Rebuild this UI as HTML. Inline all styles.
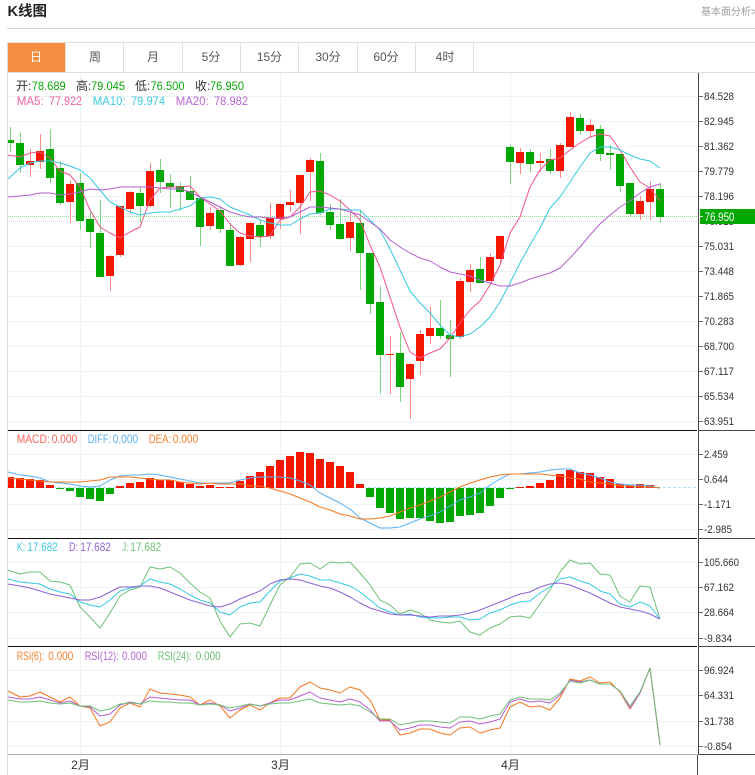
<!DOCTYPE html>
<html><head><meta charset="utf-8"><title>K线图</title>
<style>
html,body{margin:0;padding:0;background:#fff;width:755px;height:775px;overflow:hidden}
svg{display:block;position:absolute;left:0;top:0}
text{font-family:"Liberation Sans","Noto Sans CJK SC",sans-serif;font-size:11px}
.l text{font-size:12px}
polyline{fill:none;stroke-width:1;stroke-linejoin:round}
</style></head><body>
<svg width="755" height="775" viewBox="0 0 755 775" xmlns="http://www.w3.org/2000/svg">
<text x="7.5" y="16" style="font-size:14.5px;font-weight:bold" fill="#222">K线图</text>
<text x="701" y="15" style="font-size:10px" fill="#a0a0a0">基本面分析&gt;</text>
<path d="M7 28.5H755" stroke="#d4d4d4"/>
<path d="M7 42.5H755M7 72.5H755" stroke="#dedede"/>
<path d="M7.5 42V775" stroke="#dcdcdc"/>
<rect x="8" y="43" width="57" height="29" fill="#f38d40"/>
<path d="M65.5 43V72M123.5 43V72M182.5 43V72M240.5 43V72M298.5 43V72M357.5 43V72M415.5 43V72M473.5 43V72" stroke="#dedede"/>
<g style="font-size:12px" text-anchor="middle" fill="#555">
<text x="36" y="61" style="font-size:12px" fill="#fff">日</text>
<text x="95" y="61" style="font-size:12px">周</text>
<text x="153" y="61" style="font-size:12px">月</text>
<text x="211" y="61" style="font-size:12px">5分</text>
<text x="269.5" y="61" style="font-size:12px">15分</text>
<text x="328" y="61" style="font-size:12px">30分</text>
<text x="386" y="61" style="font-size:12px">60分</text>
<text x="445" y="61" style="font-size:12px">4时</text>
</g>
<!-- grid -->
<path d="M8 96.5H697M8 121.5H697M8 146.5H697M8 171.5H697M8 196.5H697M8 221.5H697M8 246.5H697M8 271.5H697M8 296.5H697M8 321.5H697M8 346.5H697M8 371.5H697M8 396.5H697M8 421.5H697M8 454.5H697M8 479.5H697M8 504.5H697M8 529.5H697M8 562.5H697M8 587.5H697M8 612.5H697M8 638.5H697M8 670.5H697M8 695.5H697M8 721.5H697M8 746.5H697" stroke="#edf2f6"/>
<path d="M80.5 73V757M280.5 73V757M510.5 73V757" stroke="#ecf2f6"/>
<path d="M8 216.5H697" stroke="#8fdc8f" stroke-dasharray="1 1"/>
<!-- candles -->
<path d="M10.5 127V152M20.5 133V173M50.5 129V183M60.5 161V205M80.5 173V230M90.5 212V248M100.5 200V277M140.5 187V223M160.5 159V193M170.5 174V208M180.5 182V211M190.5 176V200M200.5 198V246M220.5 206V233M230.5 223V266M260.5 220V247M320.5 153V215M330.5 204V230M340.5 199V240M360.5 210V290M370.5 253V314M380.5 286V394M400.5 332V402M440.5 300V339M450.5 320V377M480.5 257V283M510.5 144V184M530.5 149V172M550.5 149V174M580.5 114V135M600.5 125V161M610.5 145V170M620.5 154V192M630.5 183V217M660.5 183V223" stroke="#7ad77a"/>
<path d="M30.5 149V177M40.5 134V169M70.5 180V223M110.5 255V291M120.5 206V257M130.5 191V214M150.5 163V207M210.5 207V230M240.5 236V266M250.5 222V262M270.5 203V239M280.5 203V229M290.5 190V212M300.5 175V234M310.5 158V201M350.5 213V251M390.5 336V394M410.5 363V419M420.5 330V375M430.5 306V344M460.5 278V339M470.5 264V292M490.5 253V281M500.5 236V263M520.5 148V174M540.5 153V172M560.5 143V178M570.5 112V147M590.5 119V138M640.5 196V220M650.5 181V220" stroke="#fb8a80"/>
<path fill="#02a802" d="M8 140h6V143h-6zM16 143h8V165h-8zM46 149h8V178h-8zM56 168h8V203h-8zM76 183h8V221h-8zM86 219h8V232h-8zM96 233h8V277h-8zM136 193h8V206h-8zM156 170h8V182h-8zM166 183h8V187h-8zM176 186h8V192h-8zM186 191h8V200h-8zM196 198h8V227h-8zM216 210h8V229h-8zM226 230h8V266h-8zM256 225h8V237h-8zM316 161h8V213h-8zM326 212h8V225h-8zM336 224h8V239h-8zM356 223h8V253h-8zM366 253h8V304h-8zM376 302h8V355h-8zM396 353h8V387h-8zM436 328h8V336h-8zM446 335h8V339h-8zM476 269h8V283h-8zM506 147h8V162h-8zM526 152h8V164h-8zM546 159h8V171h-8zM576 118h8V131h-8zM596 129h8V154h-8zM606 153h8V155h-8zM616 154h8V186h-8zM626 183h8V214h-8zM656 189h8V217h-8z"/>
<path fill="#f51600" d="M26 161h8V165h-8zM36 151h8V162h-8zM66 184h8V202h-8zM106 256h8V276h-8zM116 206h8V255h-8zM126 192h8V209h-8zM146 171h8V206h-8zM206 213h8V226h-8zM236 237h8V265h-8zM246 223h8V239h-8zM266 218h8V236h-8zM276 204h8V219h-8zM286 202h8V205h-8zM296 175h8V203h-8zM306 160h8V172h-8zM346 222h8V238h-8zM386 354h8V355h-8zM406 364h8V379h-8zM416 334h8V361h-8zM426 328h8V336h-8zM456 281h8V337h-8zM466 270h8V282h-8zM486 257h8V281h-8zM496 236h8V259h-8zM516 152h8V163h-8zM536 161h8V163h-8zM556 145h8V171h-8zM566 117h8V147h-8zM586 125h8V131h-8zM636 201h8V214h-8zM646 189h8V202h-8z"/>
<!-- MA -->
<polyline stroke="#f0528c" points="8,155 20,157 30,153 40,152 50,158 60,171 70,175 80,187 90,210 100,227 110,233 120,238 130,232 140,227 150,200 160,188 170,187 180,187 190,186 200,197 210,204 220,211 230,224 240,233 250,236 260,237 270,236 280,220 290,217 300,207 310,192 320,191 330,195 340,201 350,210 360,220 370,245 380,267 390,297 400,327 410,352 420,358 430,353 440,349 450,338 460,323 470,310 480,301 490,285 500,265 510,233 520,217 530,187 540,170 550,160 560,158 570,150 580,143 590,137 600,134 610,136 620,150 630,167 640,182 650,188 660,201"/>
<polyline stroke="#35c9e2" points="8,179 20,168 30,163 40,161 50,161 60,163 70,166 80,170 90,178 100,190 110,202 120,207 130,212 140,215 150,213 160,212 170,212 180,209 190,206 200,198 210,197 220,199 230,207 240,211 250,215 260,220 270,223 280,225 290,225 300,219 310,214 320,213 330,209 340,209 350,210 360,210 370,220 380,230 390,249 400,270 410,291 420,303 430,313 440,325 450,335 460,337 470,334 480,327 490,317 500,302 510,283 520,263 530,245 540,228 550,208 560,197 570,182 580,167 590,153 600,147 610,147 620,150 630,155 640,159 650,161 660,168"/>
<polyline stroke="#b55fd2" points="8,197 20,196 30,195 40,193 50,193 60,195 70,194 80,192 90,189 100,190 110,189 120,187 130,187 140,187 150,187 160,188 170,189 180,189 190,192 200,197 210,202 220,207 230,212 240,215 250,217 260,217 270,218 280,218 290,217 300,212 310,207 320,207 330,208 340,209 350,212 360,215 370,222 380,229 390,240 400,247 410,253 420,258 430,261 440,267 450,272 460,274 470,276 480,280 490,283 500,286 510,286 520,283 530,279 540,276 550,273 560,268 570,258 580,247 590,235 600,224 610,215 620,207 630,201 640,193 650,187 660,184"/>
<!-- MACD -->
<path d="M8 487.5H697" stroke="#a9e5f5" stroke-dasharray="3 2"/>
<path fill="#02a802" d="M56 488h8V489h-8zM66 488h8V491h-8zM76 488h8V497h-8zM86 488h8V499h-8zM96 488h8V501h-8zM106 488h8V494h-8zM366 488h8V497h-8zM376 488h8V508h-8zM386 488h8V513h-8zM396 488h8V519h-8zM406 488h8V518h-8zM416 488h8V518h-8zM426 488h8V521h-8zM436 488h8V523h-8zM446 488h8V522h-8zM456 488h8V516h-8zM466 488h8V515h-8zM476 488h8V513h-8zM486 488h8V506h-8zM496 488h8V498h-8zM506 488h8V489h-8z"/>
<path fill="#f51600" d="M8 477h6V488h-6zM16 478h8V488h-8zM26 479h8V488h-8zM36 480h8V488h-8zM46 485h8V488h-8zM116 486h8V488h-8zM126 483h8V488h-8zM136 482h8V488h-8zM146 478h8V488h-8zM156 480h8V488h-8zM166 480h8V488h-8zM176 482h8V488h-8zM186 484h8V488h-8zM196 486h8V488h-8zM206 485h8V488h-8zM216 487h8V488h-8zM226 487h8V488h-8zM236 481h8V488h-8zM246 476h8V488h-8zM256 472h8V488h-8zM266 466h8V488h-8zM276 460h8V488h-8zM286 456h8V488h-8zM296 452h8V488h-8zM306 453h8V488h-8zM316 459h8V488h-8zM326 462h8V488h-8zM336 466h8V488h-8zM346 472h8V488h-8zM356 484h8V488h-8zM516 487h8V488h-8zM526 486h8V488h-8zM536 483h8V488h-8zM546 480h8V488h-8zM556 474h8V488h-8zM566 470h8V488h-8zM576 472h8V488h-8zM586 473h8V488h-8zM596 477h8V488h-8zM606 479h8V488h-8zM616 484h8V488h-8zM626 485h8V488h-8zM636 484h8V488h-8zM646 485h8V488h-8z"/>
<polyline stroke="#5bb0f5" points="8,472 20,475 30,476 40,478 50,482 60,483 70,484 80,486 90,487 100,486 110,480 120,476 130,475 140,475 150,474 160,475 170,477 180,479 190,481 200,483 210,483 220,483 230,483 240,480 250,478 260,477 270,477 280,477 290,478 300,481 310,485 320,493 330,498 340,503 350,509 360,518 370,523 380,528 390,528 400,527 410,523 420,519 430,516 440,512 450,506 460,500 470,497 480,493 490,485 500,479 510,474 520,474 530,473 540,472 550,470 560,469 570,469 580,473 590,475 600,478 610,482 620,484 630,485 640,485 650,486 660,488"/>
<polyline stroke="#f6781f" points="8,478 20,479 30,480 40,481 50,482 60,482 70,482 80,482 90,481 100,480 110,477 120,477 130,477 140,478 150,479 160,480 170,480 180,482 190,483 200,484 210,483 220,484 230,484 240,484 250,486 260,486 270,488 280,491 290,494 300,498 310,502 320,507 330,510 340,514 350,516 360,519 370,519 380,518 390,516 400,512 410,508 420,505 430,501 440,497 450,492 460,487 470,483 480,480 490,477 500,475 510,474 520,474 530,474 540,474 550,475 560,476 570,478 580,479 590,482 600,483 610,484 620,486 630,486 640,487 650,487 660,488"/>
<!-- KDJ -->
<polyline stroke="#6fc076" points="8,570 20,574 30,572 40,572 50,581 60,582 70,585 80,607 90,617 100,628 110,613 120,596 130,590 140,587 150,567 160,569 170,567 180,573 190,583 200,592 210,598 220,621 230,637 240,624 250,623 260,626 270,605 280,585 290,577 300,564 310,563 320,569 330,562 340,563 350,562 360,573 370,585 380,600 390,605 400,614 410,610 420,613 430,620 440,622 450,623 460,621 470,632 480,635 490,628 500,624 510,617 520,616 530,618 540,604 550,590 560,572 570,560 580,564 590,563 600,574 610,575 620,596 630,602 640,586 650,587 660,619"/>
<polyline stroke="#35c9e2" points="8,579 20,582 30,583 40,584 50,589 60,592 70,594 80,602 90,605 100,607 110,600 120,591 130,588 140,586 150,579 160,582 170,584 180,589 190,595 200,600 210,603 220,612 230,615 240,607 250,603 260,602 270,591 280,581 290,578 300,574 310,576 320,580 330,580 340,583 350,586 360,592 370,600 380,608 390,612 400,615 410,614 420,617 430,618 440,618 450,617 460,617 470,620 480,619 490,613 500,610 510,605 520,602 530,601 540,593 550,587 560,579 570,577 580,581 590,584 600,591 610,594 620,604 630,607 640,602 650,606 660,619"/>
<polyline stroke="#8d62d4" points="8,584 20,586 30,588 40,591 50,594 60,596 70,598 80,600 90,600 100,597 110,592 120,587 130,587 140,586 150,586 160,588 170,592 180,596 190,600 200,603 210,606 220,607 230,604 240,599 250,595 260,591 270,584 280,580 290,579 300,580 310,583 320,586 330,588 340,592 350,597 360,603 370,608 380,611 390,614 400,615 410,615 420,616 430,617 440,616 450,616 460,615 470,613 480,610 490,606 500,602 510,598 520,594 530,592 540,587 550,584 560,583 570,585 580,589 590,593 600,598 610,603 620,607 630,609 640,611 650,614 660,619"/>
<!-- RSI -->
<polyline stroke="#f6781f" points="8,691 20,697 30,696 40,692 50,697 60,702 70,697 80,706 90,708 100,726 110,722 120,708 130,703 140,707 150,689 160,693 170,694 180,695 190,697 200,705 210,700 220,706 230,718 240,710 250,705 260,710 270,703 280,698 290,698 300,687 310,682 320,688 330,690 340,693 350,687 360,690 370,700 380,720 390,720 400,735 410,733 420,729 430,729 440,733 450,735 460,728 470,727 480,733 490,730 500,728 510,707 520,702 530,707 540,706 550,710 560,698 570,679 580,681 590,677 600,683 610,682 620,692 630,709 640,693 650,668 660,745"/>
<polyline stroke="#b55fd2" points="8,697 20,699 30,699 40,697 50,700 60,703 70,701 80,706 90,707 100,716 110,714 120,705 130,702 140,704 150,697 160,698 170,699 180,700 190,700 200,705 210,703 220,705 230,711 240,708 250,704 260,706 270,703 280,700 290,700 300,696 310,692 320,698 330,700 340,702 350,699 360,702 370,710 380,721 390,721 400,730 410,728 420,725 430,725 440,727 450,728 460,722 470,721 480,724 490,722 500,719 510,702 520,699 530,702 540,701 550,703 560,695 570,680 580,682 590,680 600,684 610,684 620,691 630,708 640,693 650,668 660,745"/>
<polyline stroke="#6fc076" points="8,700 20,702 30,702 40,701 50,703 60,704 70,703 80,706 90,706 100,711 110,709 120,704 130,703 140,704 150,701 160,702 170,702 180,703 190,703 200,705 210,704 220,705 230,708 240,706 250,704 260,706 270,704 280,703 290,703 300,701 310,699 320,703 330,704 340,705 350,704 360,706 370,712 380,719 390,719 400,725 410,723 420,721 430,721 440,722 450,723 460,717 470,717 480,719 490,716 500,714 510,700 520,697 530,699 540,699 550,700 560,693 570,681 580,683 590,680 600,684 610,684 620,691 630,706 640,692 650,668 660,745"/>
<!-- panel borders -->
<path d="M8 430.5H697M8 538.5H697M8 646.5H697" stroke="#111"/>
<path d="M8 754.5H697" stroke="#b0b0b0"/>
<path d="M698.5 73V755M697.5 755V775M698 430.5H755M698 538.5H755M698 646.5H755M698 754.5H755" stroke="#444"/>
<path d="M699 96.5h4M699 121.5h4M699 146.5h4M699 171.5h4M699 196.5h4M699 246.5h4M699 271.5h4M699 296.5h4M699 321.5h4M699 346.5h4M699 371.5h4M699 396.5h4M699 421.5h4M699 454.5h4M699 479.5h4M699 504.5h4M699 529.5h4M699 562.5h4M699 587.5h4M699 612.5h4M699 638.5h4M699 670.5h4M699 695.5h4M699 721.5h4M699 746.5h4" stroke="#666"/>
<!-- axis labels -->
<g fill="#333">
<text x="704" y="100" textLength="30" lengthAdjust="spacingAndGlyphs">84.528</text>
<text x="704" y="125" textLength="30" lengthAdjust="spacingAndGlyphs">82.945</text>
<text x="704" y="150" textLength="30" lengthAdjust="spacingAndGlyphs">81.362</text>
<text x="704" y="175" textLength="30" lengthAdjust="spacingAndGlyphs">79.779</text>
<text x="704" y="200" textLength="30" lengthAdjust="spacingAndGlyphs">78.196</text>
<text x="704" y="225" textLength="30" lengthAdjust="spacingAndGlyphs">76.613</text>
<text x="704" y="250" textLength="30" lengthAdjust="spacingAndGlyphs">75.031</text>
<text x="704" y="275" textLength="30" lengthAdjust="spacingAndGlyphs">73.448</text>
<text x="704" y="300" textLength="30" lengthAdjust="spacingAndGlyphs">71.865</text>
<text x="704" y="325" textLength="30" lengthAdjust="spacingAndGlyphs">70.283</text>
<text x="704" y="350" textLength="30" lengthAdjust="spacingAndGlyphs">68.700</text>
<text x="704" y="375" textLength="30" lengthAdjust="spacingAndGlyphs">67.117</text>
<text x="704" y="400" textLength="30" lengthAdjust="spacingAndGlyphs">65.534</text>
<text x="704" y="425" textLength="30" lengthAdjust="spacingAndGlyphs">63.951</text>
<text x="704" y="458" textLength="24" lengthAdjust="spacingAndGlyphs">2.459</text>
<text x="704" y="483" textLength="24" lengthAdjust="spacingAndGlyphs">0.644</text>
<text x="704" y="508" textLength="27" lengthAdjust="spacingAndGlyphs">-1.171</text>
<text x="704" y="533" textLength="28" lengthAdjust="spacingAndGlyphs">-2.985</text>
<text x="704" y="566" textLength="35" lengthAdjust="spacingAndGlyphs">105.660</text>
<text x="704" y="591" textLength="30" lengthAdjust="spacingAndGlyphs">67.162</text>
<text x="704" y="616" textLength="30" lengthAdjust="spacingAndGlyphs">28.664</text>
<text x="704" y="642" textLength="28" lengthAdjust="spacingAndGlyphs">-9.834</text>
<text x="704" y="674" textLength="30" lengthAdjust="spacingAndGlyphs">96.924</text>
<text x="704" y="699" textLength="30" lengthAdjust="spacingAndGlyphs">64.331</text>
<text x="704" y="725" textLength="30" lengthAdjust="spacingAndGlyphs">31.738</text>
<text x="704" y="750" textLength="28" lengthAdjust="spacingAndGlyphs">-0.854</text>
</g>
<rect x="700" y="209" width="55" height="15" fill="#02a802"/>
<path d="M699 216.5h4" stroke="#fff"/>
<text x="704.5" y="221" textLength="30" lengthAdjust="spacingAndGlyphs" style="font-size:12px" fill="#fff">76.950</text>
<!-- legends -->
<g class="l">
<g fill="#333">
<text x="16" y="90">开:</text>
<text x="76" y="90">高:</text>
<text x="135" y="90">低:</text>
<text x="195" y="90">收:</text>
</g>
<g fill="#0aa80a">
<text x="31.7" y="90" textLength="34" lengthAdjust="spacingAndGlyphs">78.689</text>
<text x="91" y="90" textLength="34" lengthAdjust="spacingAndGlyphs">79.045</text>
<text x="150.5" y="90" textLength="34" lengthAdjust="spacingAndGlyphs">76.500</text>
<text x="210" y="90" textLength="34" lengthAdjust="spacingAndGlyphs">76.950</text>
</g>
<g fill="#f0609a">
<text x="16.7" y="105" textLength="27" lengthAdjust="spacingAndGlyphs">MA5:</text>
<text x="49" y="105" textLength="33" lengthAdjust="spacingAndGlyphs">77.922</text>
</g>
<g fill="#3ccbe4">
<text x="92.7" y="105" textLength="33" lengthAdjust="spacingAndGlyphs">MA10:</text>
<text x="131" y="105" textLength="34" lengthAdjust="spacingAndGlyphs">79.974</text>
</g>
<g fill="#b866d4">
<text x="175.7" y="105" textLength="33" lengthAdjust="spacingAndGlyphs">MA20:</text>
<text x="214" y="105" textLength="34" lengthAdjust="spacingAndGlyphs">78.982</text>
</g>
<g fill="#f4655a">
<text x="16.7" y="443" textLength="33" lengthAdjust="spacingAndGlyphs">MACD:</text>
<text x="51.7" y="443" textLength="25.5" lengthAdjust="spacingAndGlyphs">0.000</text>
</g>
<g fill="#5bb0f5">
<text x="87.7" y="443" textLength="23.5" lengthAdjust="spacingAndGlyphs">DIFF:</text>
<text x="112.7" y="443" textLength="25.5" lengthAdjust="spacingAndGlyphs">0.000</text>
</g>
<g fill="#f9812f">
<text x="148.7" y="443" textLength="22.5" lengthAdjust="spacingAndGlyphs">DEA:</text>
<text x="172.7" y="443" textLength="25.5" lengthAdjust="spacingAndGlyphs">0.000</text>
</g>
<g fill="#3ccbe4">
<text x="16.7" y="551" textLength="8.5" lengthAdjust="spacingAndGlyphs">K:</text>
<text x="27.3" y="551" textLength="30.5" lengthAdjust="spacingAndGlyphs">17.682</text>
</g>
<g fill="#8d62d4">
<text x="69" y="551" textLength="9" lengthAdjust="spacingAndGlyphs">D:</text>
<text x="80.3" y="551" textLength="30.5" lengthAdjust="spacingAndGlyphs">17.682</text>
</g>
<g fill="#6fc076">
<text x="122.3" y="551" textLength="6" lengthAdjust="spacingAndGlyphs">J:</text>
<text x="130.3" y="551" textLength="31" lengthAdjust="spacingAndGlyphs">17.682</text>
</g>
<g fill="#f9812f">
<text x="16.7" y="660" textLength="27.5" lengthAdjust="spacingAndGlyphs">RSI(6):</text>
<text x="48.3" y="660" textLength="25" lengthAdjust="spacingAndGlyphs">0.000</text>
</g>
<g fill="#b866d4">
<text x="84.7" y="660" textLength="34" lengthAdjust="spacingAndGlyphs">RSI(12):</text>
<text x="122" y="660" textLength="25" lengthAdjust="spacingAndGlyphs">0.000</text>
</g>
<g fill="#6fc076">
<text x="157.7" y="660" textLength="34" lengthAdjust="spacingAndGlyphs">RSI(24):</text>
<text x="195.7" y="660" textLength="25" lengthAdjust="spacingAndGlyphs">0.000</text>
</g>
</g>
<!-- x axis -->
<g fill="#333" text-anchor="middle">
<text x="80.5" y="769" style="font-size:12px">2月</text>
<text x="280.5" y="769" style="font-size:12px">3月</text>
<text x="510.5" y="769" style="font-size:12px">4月</text>
</g>
</svg>
</body></html>
